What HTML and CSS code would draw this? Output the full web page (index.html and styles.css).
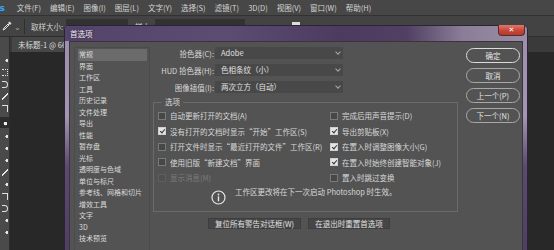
FILE: index.html
```html
<!DOCTYPE html>
<html lang="zh-CN">
<head>
    <meta charset="UTF-8">
    <title>首选项</title>
    <link rel="stylesheet" href="styles.css">
</head>
<body>
<div class="app">
    <div class="menubar">
        <span class="logo">Ps</span>
        <span>文件(F)</span>
        <span>编辑(E)</span>
        <span>图像(I)</span>
        <span>图层(L)</span>
        <span>文字(Y)</span>
        <span>选择(S)</span>
        <span>滤镜(T)</span>
        <span>3D(D)</span>
        <span>视图(V)</span>
        <span>窗口(W)</span>
        <span>帮助(H)</span>
    </div>

    <div class="optionsbar">
        <svg class="tool-icon" width="10" height="10" viewBox="0 0 10 10">
            <path d="M1 9 L2 7 L6 3 L7 4 L3 8 Z" fill="none" stroke="#e0e0e0" stroke-width="1"/>
            <path d="M6 2 L7.5 0.5 L9.5 2.5 L8 4 Z" fill="#e0e0e0"/>
        </svg>
        <span class="caret">⌄</span>
        <span class="sep"></span>
        <span class="opt-label">取样大小:</span>
        <span class="opt-select"></span>
        <span class="opt-label">样本:</span>
        <span class="opt-select wide"></span>
        <span class="opt-check"><i></i></span>
    </div>

    <div class="workspace">
        <div class="toolbar">
            <span class="tb dot"></span>
            <span class="tb marquee"></span>
            <span class="tb lasso"></span>
            <span class="tb brush"></span>
            <span class="tb crop"></span>
            <span class="tb active"></span>
            <span class="tb dot"></span>
            <span class="tb dot"></span>
            <span class="tb dot"></span>
            <span class="tb brush"></span>
            <span class="tb dot"></span>
            <span class="tb crop"></span>
            <span class="tb lasso"></span>
            <span class="tb dot"></span>
            <span class="tb dot"></span>
        </div>
        <div class="docarea">
            <div class="doctabs">
                <span class="doctab">未标题-1 @ 66.7%(RGB/8#)</span>
            </div>
            <div class="canvas"></div>
        </div>
    </div>

    <div class="dialog">
        <div class="titlebar">
            <span class="title">首选项</span>
            <span class="close">✕</span>
        </div>
        <div class="dialog-body">
            <ul class="nav">
                <li class="selected">常规</li>
                <li>界面</li>
                <li>工作区</li>
                <li>工具</li>
                <li>历史记录</li>
                <li>文件处理</li>
                <li>导出</li>
                <li>性能</li>
                <li>暂存盘</li>
                <li>光标</li>
                <li>透明度与色域</li>
                <li>单位与标尺</li>
                <li>参考线、网格和切片</li>
                <li>增效工具</li>
                <li>文字</li>
                <li>3D</li>
                <li>技术预览</li>
            </ul>

            <div class="panel">
                <div class="field-row">
                    <span class="field-label">拾色器(C):</span>
                    <span class="dropdown">Adobe</span>
                </div>
                <div class="field-row">
                    <span class="field-label">HUD 拾色器(H):</span>
                    <span class="dropdown">色相条纹（小）</span>
                </div>
                <div class="field-row">
                    <span class="field-label">图像插值(I):</span>
                    <span class="dropdown">两次立方（自动）</span>
                </div>

                <fieldset class="options">
                    <legend>选项</legend>
                    <div class="check-grid">
                        <label class="check"><span class="box"></span>自动更新打开的文档(A)</label>
                        <label class="check"><span class="box"></span>完成后用声音提示(D)</label>
                        <label class="check"><span class="box on"></span>没有打开的文档时显示“开始”工作区(S)</label>
                        <label class="check"><span class="box on"></span>导出剪贴板(X)</label>
                        <label class="check"><span class="box"></span>打开文件时显示“最近打开的文件”工作区(R)</label>
                        <label class="check"><span class="box on"></span>在置入时调整图像大小(G)</label>
                        <label class="check"><span class="box"></span>使用旧版“新建文档”界面</label>
                        <label class="check"><span class="box on"></span>在置入时始终创建智能对象(J)</label>
                        <label class="check disabled"><span class="box"></span>显示消息(M)</label>
                        <label class="check"><span class="box"></span>置入时跳过变换</label>
                    </div>
                    <div class="notice">
                        <svg class="info-icon" width="15" height="15" viewBox="0 0 15 15">
                            <circle cx="7.5" cy="7.5" r="6.5" fill="none" stroke="#e6e6e6" stroke-width="1.2"/>
                            <circle cx="7.5" cy="4.5" r="0.9" fill="#e6e6e6"/>
                            <rect x="6.8" y="6.3" width="1.4" height="5" fill="#e6e6e6"/>
                        </svg>
                        <span>工作区更改将在下一次启动 Photoshop 时生效。</span>
                    </div>
                </fieldset>

                <div class="reset-row">
                    <button class="flat-btn">复位所有警告对话框(W)</button>
                    <button class="flat-btn">在退出时重置首选项</button>
                </div>
            </div>

            <div class="actions">
                <button class="pill-btn primary">确定</button>
                <button class="pill-btn">取消</button>
                <button class="pill-btn">上一个(P)</button>
                <button class="pill-btn">下一个(N)</button>
            </div>
        </div>
    </div>
</div>
</body>
</html>
```

FILE: styles.css
```css
* {
    box-sizing: border-box;
    margin: 0;
    padding: 0;
}

body {
    width: 554px;
    height: 250px;
    overflow: hidden;
    background-color: #282828;
    font-family: "Noto Sans CJK SC", "Noto Sans", sans-serif;
    font-size: 7.5px;
    color: #d8d8d8;
}

.app {
    position: relative;
    width: 554px;
    height: 250px;
    display: flex;
    flex-direction: column;
}

/* top menu */
.menubar {
    height: 16px;
    background-color: #474747;
    border-bottom: 1px solid #323232;
    display: flex;
    align-items: center;
    gap: 9px;
    white-space: nowrap;
    overflow: hidden;
    color: #d4d4d4;
}

.menubar .logo {
    margin-left: -7px;
    margin-right: 3px;
    font-family: "DejaVu Sans", sans-serif;
    font-weight: bold;
    font-size: 9px;
    color: #31a8ff;
}

.optionsbar {
    height: 21px;
    background-color: #434343;
    border-bottom: 1px solid #2e2e2e;
    display: flex;
    align-items: center;
    white-space: nowrap;
    overflow: hidden;
    color: #d4d4d4;
}

.tool-icon {
    margin-left: 2px;
}

.caret {
    margin-left: 2px;
    font-size: 8px;
    color: #aaaaaa;
}

.sep {
    width: 1px;
    height: 15px;
    background-color: #2f2f2f;
    margin: 0 6px 0 3px;
}

.opt-label {
    margin-right: 3px;
}

.opt-select {
    width: 62px;
    height: 14px;
    background-color: #323232;
    margin-right: 7px;
}

.opt-select.wide {
    width: 90px;
}

.opt-check {
    display: flex;
    align-items: center;
    margin-left: 40px;
}

.opt-check i {
    width: 8px;
    height: 8px;
    background-color: #ddd;
}

/* workspace behind the dialog */
.workspace {
    flex: 1;
    display: flex;
}

.toolbar {
    width: 10px;
    background-color: #4a4a4a;
    border-right: 1px solid #2c2c2c;
    display: flex;
    flex-direction: column;
    align-items: flex-end;
    gap: 5px;
    padding-top: 20px;
}

.tb {
    display: block;
    width: 6px;
    height: 7px;
    margin-right: 1px;
}

.tb.dot {
    background: radial-gradient(circle at 80% 50%, #e8e8e8 1.2px, transparent 1.6px);
}

.tb.marquee {
    border: 1px dotted #e0e0e0;
    border-left: none;
}

.tb.lasso {
    border: 1px solid #e0e0e0;
    border-left: none;
    border-radius: 0 4px 4px 0;
}

.tb.brush {
    background: linear-gradient(135deg, transparent 45%, #e8e8e8 45%, #e8e8e8 60%, transparent 60%);
}

.tb.crop {
    border-top: 1px solid #e0e0e0;
    border-right: 1px solid #e0e0e0;
}

.tb.active {
    width: 9px;
    height: 11px;
    margin-right: 0;
    background: #2c2c2c radial-gradient(circle at 60% 60%, #f0f0f0 1.5px, transparent 2px);
}

.docarea {
    flex: 1;
    display: flex;
    flex-direction: column;
}

.doctabs {
    height: 15px;
    background-color: #3a3a3a;
    display: flex;
    padding-left: 2px;
}

.doctab {
    background-color: #474747;
    padding: 0 6px 0 6px;
    line-height: 15px;
    color: #dcdcdc;
    white-space: nowrap;
}

.canvas {
    flex: 1;
    background-color: #282828;
}

/* preferences dialog */
.dialog {
    position: absolute;
    left: 64px;
    top: 25px;
    width: 464px;
    height: 240px;
    border: 1px solid #2b2433;
    border-radius: 5px 5px 0 0;
    background: linear-gradient(to bottom, #9d8fac 0px, #a496b2 90px, #5c4a70 140px, #4d3d60 100%);
    display: flex;
    flex-direction: column;
}

.titlebar {
    height: 15px;
    display: flex;
    background: linear-gradient(to right, #54436a 0%, #5d4c72 35%, #4c3b5f 60%, #514062 74%, #8b7d98 86%, #9a8fa6 100%);
    border-radius: 4px 4px 0 0;
}

.title {
    padding-left: 5px;
    line-height: 15px;
    color: #f0eef2;
    text-shadow: 0 0 3px #2a2033;
}

.close {
    margin-left: auto;
    margin-right: 2px;
    width: 27px;
    height: 11px;
    margin-top: -1px;
    background: linear-gradient(to bottom, #e0766b, #c8463a 55%, #b23a2f);
    border: 1px solid #5a2a2a;
    border-top: none;
    border-radius: 0 0 4px 4px;
    color: #ffffff;
    font-family: "DejaVu Sans", sans-serif;
    font-size: 7px;
    font-weight: bold;
    text-align: center;
    line-height: 10px;
}

.dialog-body {
    flex: 1;
    margin: 0 4px;
    background-color: #535353;
    border: 1px solid #3b3340;
    display: flex;
    padding: 5px 0 0 4px;
}

.nav {
    list-style: none;
    width: 76px;
    padding: 1px 2px 0 3px;
    border: 1px solid #4b4b4b;
    border-bottom: none;
}

.nav li {
    height: 11.5px;
    line-height: 11.5px;
    padding-left: 1px;
    font-size: 7px;
    color: #dadada;
    white-space: nowrap;
}

.nav li.selected {
    background-color: #6b6b6b;
}

.panel {
    width: 311px;
    display: flex;
    flex-direction: column;
}

.field-row {
    display: flex;
    align-items: center;
    height: 12px;
    margin-bottom: 5px;
}

.field-label {
    width: 64px;
    text-align: right;
    margin-right: 1px;
    white-space: nowrap;
}

.dropdown {
    width: 128px;
    height: 12px;
    line-height: 12px;
    padding-left: 6px;
    background-color: #484848;
    position: relative;
    color: #e0e0e0;
}

.dropdown::after {
    content: "";
    position: absolute;
    right: 3px;
    top: 3px;
    width: 3px;
    height: 3px;
    border-right: 1px solid #a8a8a8;
    border-bottom: 1px solid #a8a8a8;
    transform: rotate(45deg);
}

.options {
    margin: -2px 3px 0 3px;
    border: 1px solid #6a6a6a;
    padding: 0 0 6px 4px;
}

.options legend {
    margin-left: 4px;
    padding: 0 3px;
    line-height: 12px;
}

.check-grid {
    display: grid;
    grid-template-columns: 172px 1fr;
}

.check {
    height: 15.5px;
    display: flex;
    align-items: center;
    white-space: nowrap;
}

.check .box {
    width: 8px;
    height: 8px;
    margin-right: 4px;
    background-color: #474747;
    border: 1px solid #7a7a7a;
    position: relative;
}

.check .box.on {
    background-color: #e4e4e4;
    border-color: #cfcfcf;
}

.check .box.on::after {
    content: "";
    position: absolute;
    left: 2px;
    top: 0;
    width: 2px;
    height: 4px;
    border-right: 1.3px solid #333;
    border-bottom: 1.3px solid #333;
    transform: rotate(40deg);
}

.check.disabled {
    color: #7c7c7c;
}

.check.disabled .box {
    border-color: #5e5e5e;
    background-color: #505050;
}

.notice {
    display: flex;
    align-items: flex-start;
    gap: 9px;
    margin: 0 0 0 53px;
}

.info-icon {
    margin-top: 4px;
}

.notice span {
    line-height: 12px;
}

.reset-row {
    display: flex;
    gap: 7px;
    margin: 6px 0 0 58px;
}

.flat-btn {
    height: 11px;
    padding: 0 6px;
    font-family: inherit;
    font-size: 7.5px;
    line-height: 10px;
    color: #e0e0e0;
    background-color: #464646;
    border: 1px solid #3e3e3e;
}

.actions {
    width: 54px;
    margin-left: 5px;
    padding-top: 1px;
    display: flex;
    flex-direction: column;
    gap: 5px;
}

.pill-btn {
    height: 15px;
    font-family: inherit;
    font-size: 7.5px;
    color: #e4e4e4;
    background-color: #535353;
    border: 1px solid #a8a8a8;
    border-radius: 8px;
}

.pill-btn.primary {
    border-color: #dcdcdc;
}
```
